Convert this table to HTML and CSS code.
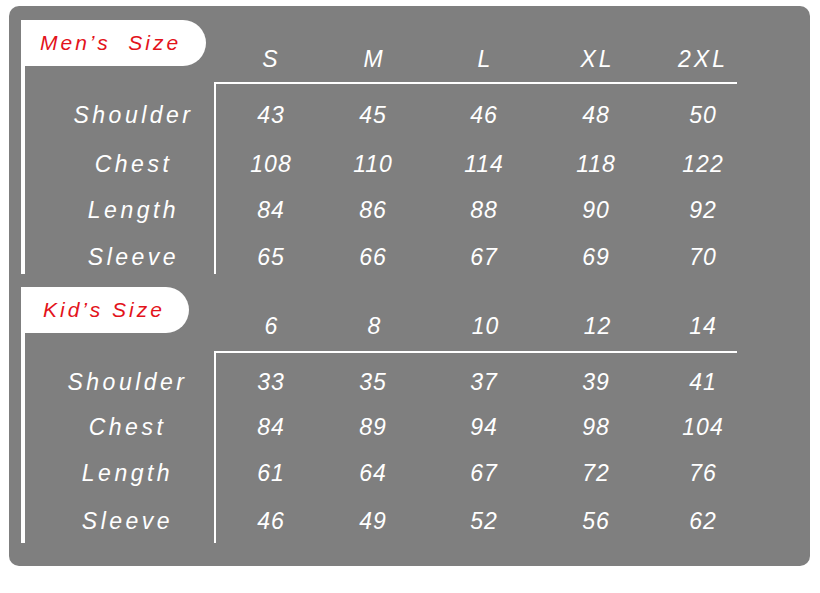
FILE: index.html
```html
<!DOCTYPE html>
<html>
<head>
<meta charset="utf-8">
<link rel="stylesheet" href="styles.css">
</head>
<body>
<div class="panel">
  <section class="sec sec-men">
    <div class="top">
      <div class="tab tab-men">Men’s&nbsp; Size</div>
      <div class="heads">
        <span>S</span><span>M</span><span>L</span><span>XL</span><span class="last">2XL</span>
      </div>
    </div>
    <div class="body">
      <div class="labels">
        <span>Shoulder</span><span>Chest</span><span>Length</span><span>Sleeve</span>
      </div>
      <div class="data">
        <span>43</span><span>45</span><span>46</span><span>48</span><span class="last">50</span>
        <span>108</span><span>110</span><span>114</span><span>118</span><span class="last">122</span>
        <span>84</span><span>86</span><span>88</span><span>90</span><span class="last">92</span>
        <span>65</span><span>66</span><span>67</span><span>69</span><span class="last">70</span>
      </div>
    </div>
  </section>
  <section class="sec sec-kid">
    <div class="top">
      <div class="tab tab-kid">Kid’s Size</div>
      <div class="heads">
        <span>6</span><span>8</span><span>10</span><span>12</span><span class="last">14</span>
      </div>
    </div>
    <div class="body">
      <div class="labels">
        <span>Shoulder</span><span>Chest</span><span>Length</span><span>Sleeve</span>
      </div>
      <div class="data">
        <span>33</span><span>35</span><span>37</span><span>39</span><span class="last">41</span>
        <span>84</span><span>89</span><span>94</span><span>98</span><span class="last">104</span>
        <span>61</span><span>64</span><span>67</span><span>72</span><span class="last">76</span>
        <span>46</span><span>49</span><span>52</span><span>56</span><span class="last">62</span>
      </div>
    </div>
  </section>
</div>
</body>
</html>
```

FILE: styles.css
```css
html, body {
  margin: 0;
  padding: 0;
  background: #ffffff;
}
body {
  font-family: "Liberation Sans", Arial, sans-serif;
  font-style: italic;
  color: #ffffff;
}
.panel {
  margin: 6px 0 0 9px;
  width: 801px;
  height: 560px;
  box-sizing: border-box;
  background: #7f7f7f;
  border-radius: 10px;
  padding: 14px 0 0 12px;
  display: flex;
  flex-direction: column;
  gap: 13px;
}
.sec {
  border-left: 4px solid #ffffff;
  width: 712px;
}
.top {
  display: grid;
  grid-template-columns: 189px 523px;
}
.sec-men .top { height: 62px; }
.sec-kid .top { height: 64px; }
.tab {
  margin-left: -4px;
  height: 46px;
  background: #ffffff;
  border-radius: 0 23px 23px 0;
  color: #e3131b;
  font-size: 21px;
  letter-spacing: 3px;
  line-height: 46px;
  white-space: nowrap;
  box-sizing: border-box;
}
.tab-men { width: 185px; padding-left: 19px; }
.tab-kid { width: 168px; padding-left: 22px; }
.heads {
  align-self: end;
  display: grid;
  grid-template-columns: 112px 94px 128px 96px 93px;
  font-size: 23px;
  line-height: 30px;
  letter-spacing: 3px;
  text-align: center;
}
.sec-men .heads { margin-bottom: 8px; }
.sec-kid .heads { margin-bottom: 10px; letter-spacing: 1px; }
.heads span { padding-left: 3px; }
.heads .last, .data .last { padding-left: 25px; }
.body {
  display: grid;
  grid-template-columns: 189px 523px;
  height: 192px;
}
.labels, .data {
  display: grid;
  font-size: 23px;
  line-height: 30px;
  text-align: center;
}
.labels {
  letter-spacing: 3.5px;
}
.labels span { padding-left: 3px; }
.data {
  grid-template-columns: 110px 94px 128px 96px 93px;
  border-top: 2px solid #ffffff;
  border-left: 2px solid #ffffff;
  letter-spacing: 1px;
}
.sec-men .labels { padding: 18px 0 0 25px; grid-template-rows: 49px 46px 47px 30px; }
.sec-men .data { padding-top: 16px; grid-template-rows: 49px 46px 47px 30px; }
.sec-kid .labels { padding: 16px 0 0 13px; grid-template-rows: 45px 46px 48px 30px; }
.sec-kid .data { padding-top: 14px; grid-template-rows: 45px 46px 48px 30px; }
```
